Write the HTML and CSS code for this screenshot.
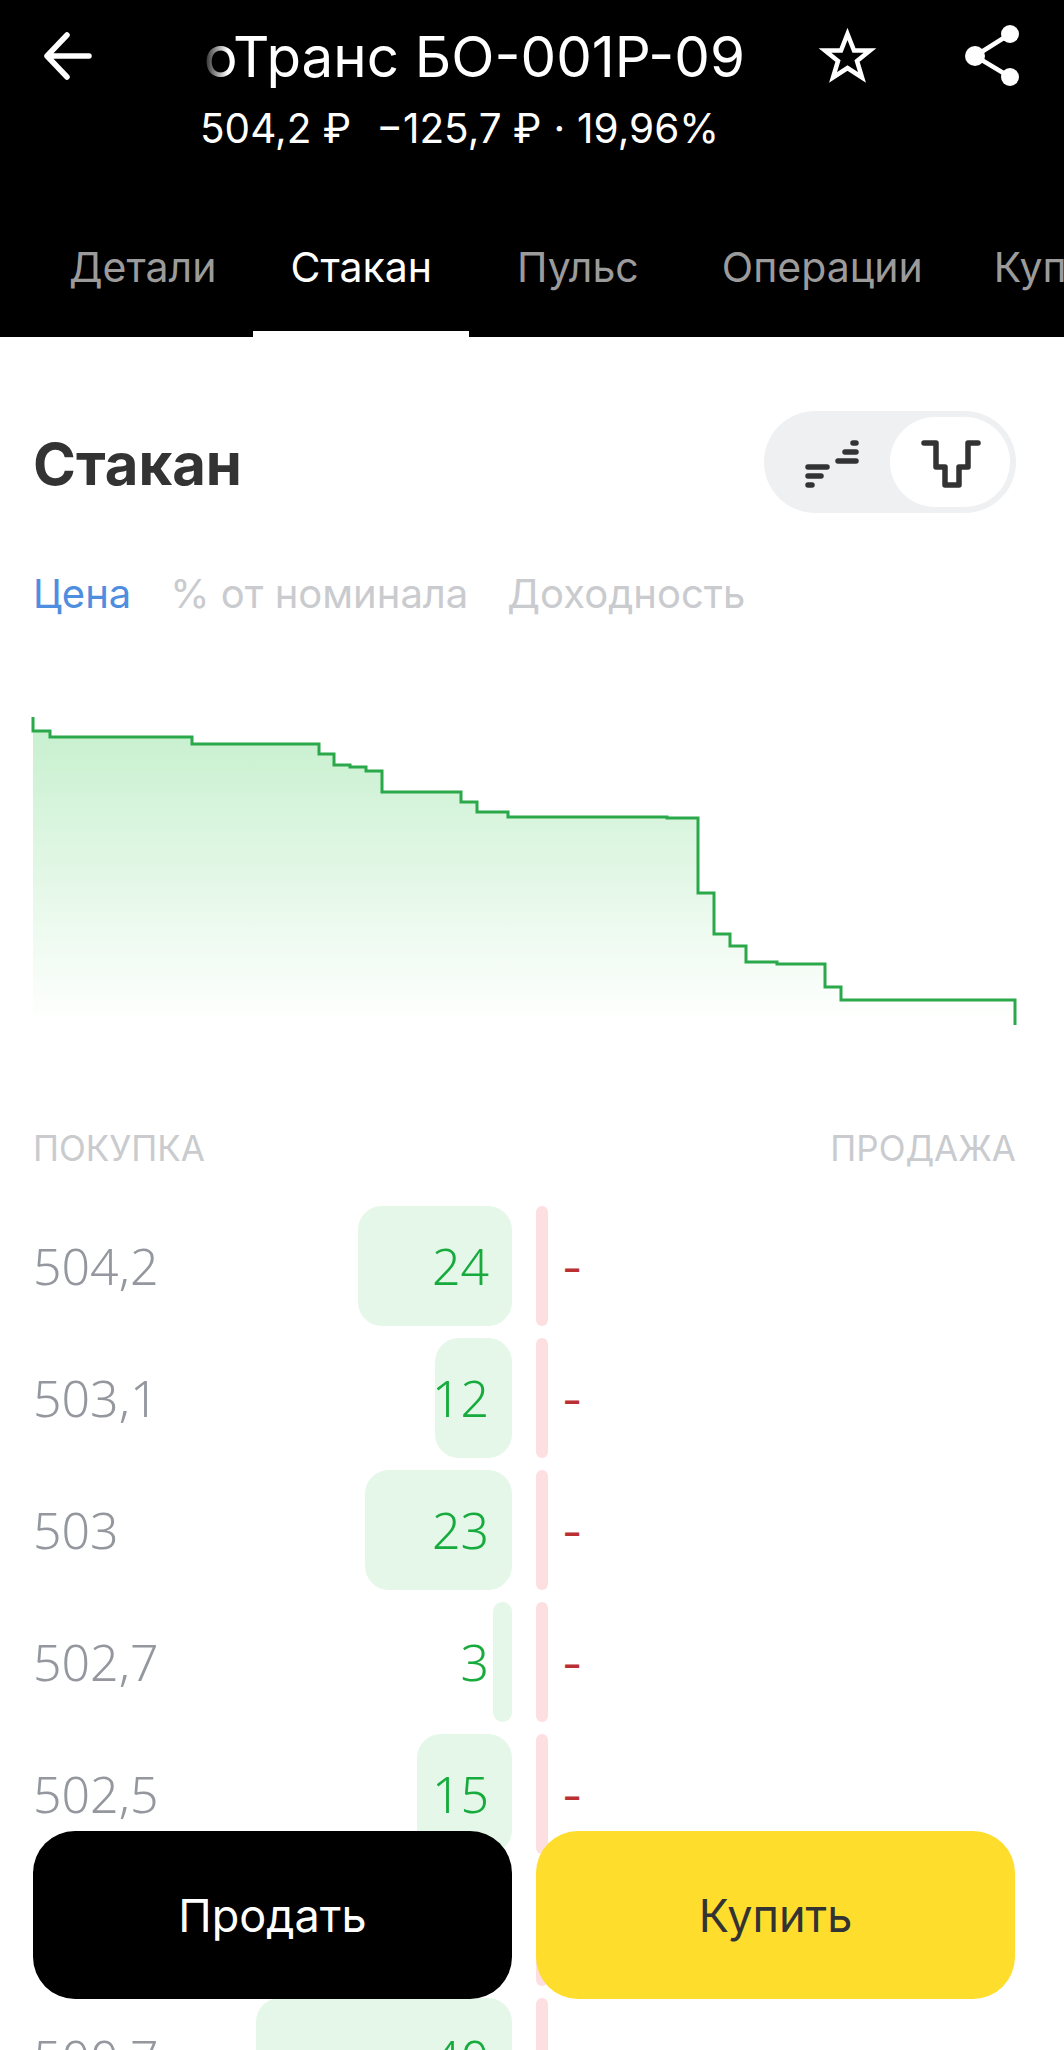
FILE: index.html
```html
<!DOCTYPE html>
<html lang="ru">
<head>
<meta charset="UTF-8">
<meta name="viewport" content="width=device-width, initial-scale=1.0">
<title>Стакан</title>
<link rel="stylesheet" href="styles.css">
</head>
<body>
<div class="app">
  <!-- Header -->
  <header class="top">
    <div class="top-bar">
      <svg class="back" width="48" height="48" viewBox="0 0 48 48" fill="none" stroke="#fff" stroke-width="5.5" stroke-linecap="round" stroke-linejoin="round">
        <path d="M45 24H4M23 3 3 24l20 21"/>
      </svg>
      <div class="top-info">
        <div class="bond-name">оТранс БО-001Р-09</div>
        <div class="bond-price">
          <span>504,2 ₽</span>
          <span>−125,7 ₽</span>
          <span class="dot">·</span>
          <span>19,96%</span>
        </div>
      </div>
      <svg class="star" width="59" height="56" viewBox="0 0 59 56" fill="none" stroke="#fff" stroke-width="4.5" stroke-miterlimit="10">
        <path d="M29.500 7l6.500 16.500h16L39 34l5 16.500L29.500 41 15 50.500 20 34 7 23.500h16z"/>
      </svg>
      <svg class="share" width="56" height="62" viewBox="0 0 56 62" fill="#fff">
        <path d="M45 9 10 31l35 21" fill="none" stroke="#fff" stroke-width="4.500"/>
        <circle cx="45" cy="9" r="9"/>
        <circle cx="10" cy="31" r="10"/>
        <circle cx="45" cy="52" r="9"/>
      </svg>
    </div>
    <nav class="tabs">
      <div class="tab">Детали</div>
      <div class="tab active">Стакан</div>
      <div class="tab pulse">Пульс</div>
      <div class="tab">Операции</div>
      <div class="tab">Купоны</div>
    </nav>
  </header>

  <!-- Title + view switch -->
  <div class="title-row">
    <h1>Стакан</h1>
    <div class="switch">
      <div class="switch-item">
        <svg width="64" height="60" viewBox="0 0 64 60" fill="none" stroke="#333" stroke-width="5.500" stroke-linecap="round">
          <path d="M10 35h19M10 44h13M10 53h4M55 11h3M47 20h11M40 29h18"/>
        </svg>
      </div>
      <div class="switch-item on">
        <svg width="64" height="60" viewBox="0 0 64 60" fill="none" stroke="#333" stroke-width="5.500" stroke-linecap="round" stroke-linejoin="round">
          <path d="M6 11h12v24h9v18h14V35h9V11h10"/>
        </svg>
      </div>
    </div>
  </div>

  <!-- Filters -->
  <div class="filters">
    <span class="filter active">Цена</span>
    <span class="filter">% от номинала</span>
    <span class="filter">Доходность</span>
  </div>

  <!-- Depth chart -->
  <svg class="depth" width="1064" height="330" viewBox="0 700 1064 330">
    <defs>
      <linearGradient id="depthFill" x1="0" y1="0" x2="0" y2="1">
        <stop offset="0" stop-color="#c8f0cf"/>
        <stop offset="1" stop-color="#ffffff"/>
      </linearGradient>
    </defs>
    <path fill="url(#depthFill)" d="M33 731H50V737H192V744H319V754H334V765H350V767H366V771H382V792H461V802H477V812H508V817H667V818H698V893H714V934H730V946H746V962H777V964H825V987H841V1000H1015V1024H33Z"/>
    <path fill="none" stroke="#2aa84a" stroke-width="3" d="M33 717V731H50V737H192V744H319V754H334V765H350V767H366V771H382V792H461V802H477V812H508V817H667V818H698V893H714V934H730V946H746V962H777V964H825V987H841V1000H1015V1025"/>
  </svg>

  <!-- Order book -->
  <div class="book-head">
    <span>ПОКУПКА</span>
    <span>ПРОДАЖА</span>
  </div>
  <div class="book">
    <div class="row">
      <div class="price">504,2</div>
      <div class="bid" style="width:154px"><span>24</span></div>
      <div class="ask"></div>
      <div class="ask-val">-</div>
    </div>
    <div class="row">
      <div class="price">503,1</div>
      <div class="bid" style="width:77px"><span>12</span></div>
      <div class="ask"></div>
      <div class="ask-val">-</div>
    </div>
    <div class="row">
      <div class="price">503</div>
      <div class="bid" style="width:147px"><span>23</span></div>
      <div class="ask"></div>
      <div class="ask-val">-</div>
    </div>
    <div class="row">
      <div class="price">502,7</div>
      <div class="bid" style="width:19px"><span>3</span></div>
      <div class="ask"></div>
      <div class="ask-val">-</div>
    </div>
    <div class="row">
      <div class="price">502,5</div>
      <div class="bid" style="width:95px"><span>15</span></div>
      <div class="ask"></div>
      <div class="ask-val">-</div>
    </div>
    <div class="row">
      <div class="price"></div>
      <div class="bid" style="width:0"></div>
      <div class="ask"></div>
      <div class="ask-val"></div>
    </div>
    <div class="row">
      <div class="price">500,7</div>
      <div class="bid" style="width:256px"><span>40</span></div>
      <div class="ask"></div>
      <div class="ask-val">-</div>
    </div>
  </div>

  <!-- Buttons -->
  <div class="actions">
    <button class="btn sell">Продать</button>
    <button class="btn buy">Купить</button>
  </div>
</div>
</body>
</html>
```

FILE: styles.css
```css
html, body {
  margin:0; padding:0;
  background:#fff;
  font-family:'Inter', 'Liberation Sans', sans-serif;
}

.app {
  width:1064px; height:2050px;
  position:relative;
  overflow:hidden;
}

/* Header */
.top {background:#000; height:337px; color:#fff;}
.top-bar {display:flex; align-items:flex-start; height:170px; padding-left:44px;}
.back {margin-top:32px;}
.top-info {width:545px; margin-left:108px; padding-top:26px;}
.bond-name {
  text-align:right; white-space:nowrap;
  font-size:56.5px; line-height:62px;
  -webkit-mask-image:linear-gradient(90deg, transparent 0, #fff 28px);
  mask-image:linear-gradient(90deg, transparent 0, #fff 28px);
}
.bond-price {display:flex; gap:25px; font-size:40.5px; line-height:50px; margin-top:16px; white-space:nowrap;}
.bond-price .dot {margin:0 -13px;}
.star {margin:27px 0 0 73px;}
.share {margin:25px 0 0 88px;}

/* Tabs */
.tabs {display:flex; white-space:nowrap; height:167px; padding-left:32px;}
.tab {
  font-size:41px; line-height:48px;
  color:#9b9b9b;
  padding:73px 37px 0;
}
.tab.pulse {padding-left:48px; padding-right:46px;}
.tab:last-child {margin-left:-3px;}
.tab.active {color:#fff; position:relative;}
.tab.active::after {
  content:''; position:absolute; left:0; right:0; bottom:0;
  height:6px; background:#fff;
}

/* Title */
.title-row {display:flex; justify-content:space-between; align-items:center; padding:74px 48px 0 33px;}
.title-row h1 {margin:4px 0 0; font-size:58px; line-height:70px; font-weight:700; color:#333;}
.switch {display:flex; width:252px; height:102px; box-sizing:border-box; padding:6px; border-radius:51px; background:#eff0f2;}
.switch-item {flex:1; display:flex; align-items:center; justify-content:center; border-radius:45px;}
.switch-item.on {flex:none; width:120px; background:#fff;}

/* Filters */
.filters {display:flex; gap:39px; padding:57px 33px 0; font-size:40px; line-height:48px;}
.filter {color:#c9cbce;}
.filter.active {color:#4f8ede;}

/* Chart */
.depth {display:block; margin-top:82px;}

/* Book */
.book-head {display:flex; justify-content:space-between; padding:98px 48px 0 33px; font-size:35px; line-height:40px; color:#c9cbce;}
.book {padding:38px 0 0 33px; display:flex; flex-direction:column; gap:12px;}
.row {display:flex; align-items:stretch; height:120px;}
.price {flex:1; font-family:'Noto Sans', sans-serif; font-size:50px; font-weight:350; line-height:120px; color:#94979d;}
.bid {
  flex:none;
  display:flex; justify-content:flex-end;
  white-space:nowrap;
  font-family:'Noto Sans', sans-serif;
  font-size:50px; font-weight:350; line-height:120px; color:#16ab3c;
  background:#e4f7e8; border-radius:24px;
}
.bid span {margin-right:23px;}
.ask {flex:none; width:12px; margin-left:24px; border-radius:6px; background:#fddfe1;}
.ask-val {flex:none; width:516px; padding-left:14px; box-sizing:border-box; font-size:44px; line-height:124px; color:#bb2f33;}

/* Buttons */
.actions {
  position:absolute; left:33px; top:1831px;
  display:flex; gap:24px;
}
.btn {
  width:479px; height:168px;
  border:none; border-radius:42px;
  font-family:inherit; font-size:45px;
}
.btn.sell {background:#000; color:#fff;}
.btn.buy {background:#ffdd2d; color:#333;}
```
